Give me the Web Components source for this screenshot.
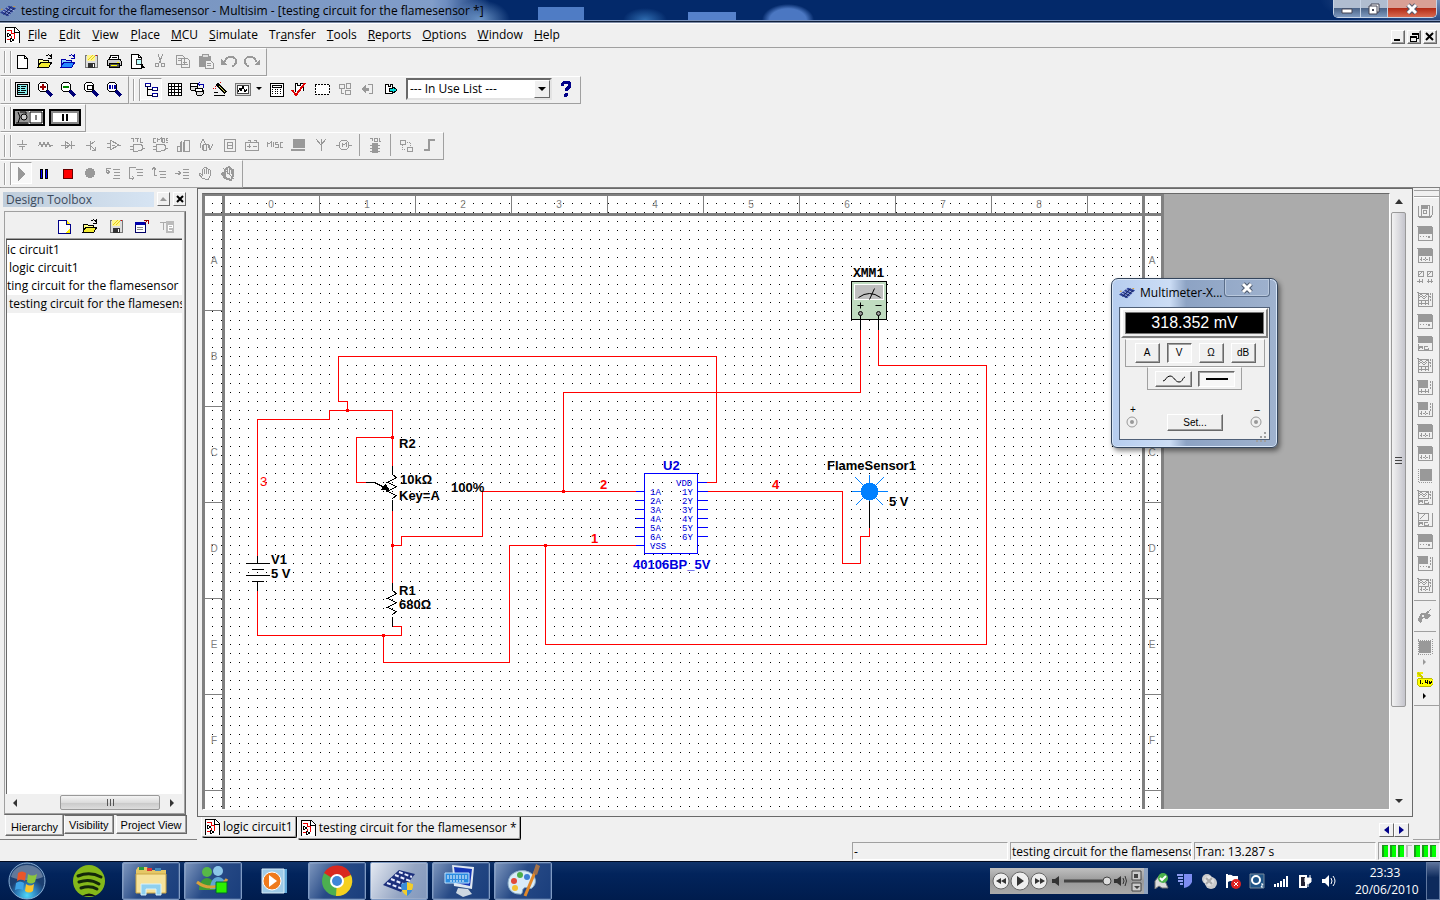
<!DOCTYPE html>
<html lang="en">
<head>
<meta charset="utf-8">
<title>testing circuit for the flamesensor - Multisim</title>
<style>
html,body{margin:0;height:100%}
body{font:12px/16px "Open Sans","Noto Sans",sans-serif;color:#000;background:#f0f0f0;overflow:hidden}
</style>
</head>
<body>
<multisim-desktop></multisim-desktop>
<script>
const G='#999';
const ICONS={
 doc:`<path d="M1 0h10l4 4v12H1z" fill="#fff" stroke="#000"/><path d="M10 0v5h5" fill="none" stroke="#000"/><path d="M3 3h4v3h3v6M3 12h4V9" fill="none" stroke="#e00"/><path d="M3 6l4 2-4 2z M6 11l4 2-4 2z" fill="#fff" stroke="#000"/>`,
 new:`<path d="M3 2h7l3 3v10H3z" fill="#fff" stroke="#000"/><path d="M10 2v3h3" fill="none" stroke="#000"/>`,
 newb:`<path d="M2 2h8l4 4v9H2z" fill="#fff" stroke="#008"/><path d="M10 2l4 4h-4z M14 10v5H9z" fill="#fe0"/><path d="M10 2v4h4v9H2" fill="none" stroke="#008"/>`,
 open:`<path d="M1 14V6h4l1 1h5v2" fill="#ff8" stroke="#000"/><path d="M1 14l3-5h11l-3 5z" fill="#f2ea30" stroke="#000"/><path d="M9 3c2-2 4-1 5 1M14 1v4h-3" fill="none" stroke="#000"/>`,
 openb:`<path d="M1 14V6h4l1 1h5v2" fill="#8cf" stroke="#00a"/><path d="M1 14l3-5h11l-3 5z" fill="#28f" stroke="#00a"/><path d="M9 3c2-2 4-1 5 1M14 1v4h-3" fill="none" stroke="#00a"/>`,
 save:`<path d="M2 2h12v12H2z" fill="#ddd" stroke="#777"/><path d="M4 2h8v6H4z" fill="#fff68c"/><path d="M5 7l5-5M8 7l4-4" stroke="#e4cc18"/><path d="M5 10h7v5H5z" fill="#333"/><path d="M10 11h1v3h-1z" fill="#fff"/><path d="M13 2h1v1h-1z" fill="#e00"/>`,
 print:`<path d="M5 2h8l-1 5H3z" fill="#fff" stroke="#000"/><path d="M6 4h5M5 6h5" stroke="#000"/><path d="M1 8l2-2h11l1 2v4H1z" fill="#ccc" stroke="#000"/><path d="M3 10h10v4H3z" fill="#555" stroke="#000"/><path d="M5 12h6" stroke="#ff0"/><path d="M11 9h2" stroke="#ff0"/>`,
 preview:`<path d="M2 1h7l3 3v11H2z" fill="#fff" stroke="#000"/><path d="M9 1v3h3" fill="none" stroke="#000"/><circle cx="10" cy="9" r="3" fill="#bff" stroke="#333"/><path d="M12 11l3 4" stroke="#000" stroke-width="2"/>`,
 cut:`<path d="M6 1l3 9M11 1L7 10" stroke="${G}" fill="none"/><circle cx="5" cy="12" r="2" fill="none" stroke="${G}"/><circle cx="11" cy="12" r="2" fill="none" stroke="${G}"/>`,
 copy:`<path d="M1 2h6l2 2v7H1z M6 5h6l2 2v7H6z" fill="#f0f0f0" stroke="${G}"/><path d="M3 5h3M3 7h3M8 9h4M8 11h5" stroke="${G}"/>`,
 paste:`<path d="M1 3h12v11H1z" fill="${G}"/><path d="M4 1h6v3H4z" fill="#ddd" stroke="${G}"/><path d="M7 7h5l3 3v5H7z" fill="#f0f0f0" stroke="${G}"/><path d="M9 10h4M9 12h4" stroke="${G}"/>`,
 undo:`<path d="M4 9C4 3 15 2 15 8c0 3-2 5-4 5" fill="none" stroke="${G}" stroke-width="2"/><path d="M0 6v6h6z" fill="${G}"/>`,
 redo:`<path d="M12 9C12 3 1 2 1 8c0 3 2 5 4 5" fill="none" stroke="${G}" stroke-width="2"/><path d="M16 6v6h-6z" fill="${G}"/>`,
 full:`<path d="M1 1h14v14H1z" fill="#eee" stroke="#000"/><path d="M3 3h10v10H3z" fill="#8ee" stroke="#000"/><path d="M4 5h2M7 5h5M4 7h2M7 7h4M4 9h2M7 9h5M4 11h7" stroke="#000"/>`,
 zin:`<path d="M10 10l5 5" stroke="#007" stroke-width="3"/><circle cx="6" cy="6" r="5" fill="#fff" stroke="#000"/><path d="M3 6h6M6 3v6" stroke="#900" stroke-width="2"/>`,
 zout:`<path d="M10 10l5 5" stroke="#007" stroke-width="3"/><circle cx="6" cy="6" r="5" fill="#fff" stroke="#000"/><path d="M3 6h6" stroke="#080" stroke-width="2"/>`,
 zarea:`<path d="M10 10l5 5" stroke="#007" stroke-width="3"/><circle cx="6" cy="6" r="5" fill="#fff" stroke="#000"/><path d="M4 4h5v4H4z" fill="none" stroke="#000"/>`,
 zfit:`<path d="M10 10l5 5" stroke="#007" stroke-width="3"/><circle cx="6" cy="6" r="5" fill="#fff" stroke="#000"/><path d="M3 4h2v4H3zM6 4h1v4H6zM8 4h2v4H8z" fill="#00a"/>`,
 tree:`<path d="M4 5v9h5M4 8h5" fill="none" stroke="#000"/><path d="M2 2h5v3H2zM9 6h5v3H9zM9 12h5v3H9z" fill="#fff" stroke="#006"/><path d="M2 2h5M9 6h5M9 12h5" stroke="#00a"/>`,
 grid:`<path d="M2 2h13v12H2z" fill="#fff" stroke="#000"/><path d="M2 5h13M2 8h13M2 11h13M5 2v12M8 2v12M12 2v12" stroke="#000"/>`,
 db:`<path d="M1 4v4c1 2 6 2 7 0V4M7 9v4c1 2 6 2 7 0V9" fill="#ddd" stroke="#000"/><ellipse cx="5" cy="4" rx="4" ry="2" fill="#fff" stroke="#000"/><ellipse cx="10" cy="9" rx="4" ry="2" fill="#fff" stroke="#000"/><path d="M9 3h5v4M11 1L9 3l2 2" fill="none" stroke="#00a"/>`,
 wand:`<path d="M5 3l9 9" stroke="#000" stroke-width="3"/><path d="M7 5l6 6" stroke="#dd6"/><path d="M2 14h11M2 11h4" stroke="#000"/><path d="M3 5v4M1 7h4M8 1v2" stroke="#d00" stroke-dasharray="1 1"/>`,
 graph:`<path d="M0 2h15v12H0z" fill="#ddd" stroke="#777"/><path d="M2 4h11v8H2z" fill="#fff" stroke="#444"/><path d="M3 11l2-4 1 3 2-5 2 6 2-3" fill="none" stroke="#000"/>`,
 calc:`<path d="M2 2h13v13H2z" fill="#fff" stroke="#000"/><path d="M4 4h9v2H4z" fill="none" stroke="#000"/><path d="M4 8h1v1H4zM7 8h1v1H7zM9 8h1v1H9zM12 8h1v1h-1zM4 10h1v1H4zM7 10h1v1H7zM9 10h1v1H9zM12 10h1v1h-1zM4 12h1v1H4zM7 12h1v1H7zM9 12h1v1H9zM12 12h1v1h-1z" fill="#000"/>`,
 check:`<path d="M4 11V2h2v2h3V2h3v8" fill="#fff" stroke="#000"/><path d="M1 9l4 5L14 2" fill="none" stroke="#d00" stroke-width="2"/>`,
 dash:`<path d="M1 3h14v10H1z" fill="#fff" stroke="#000" stroke-dasharray="2 1"/>`,
 back:`<path d="M2 3h5v4H2zM8 9h5v4H8zM9 2h4v5H9z" fill="none" stroke="${G}"/><path d="M4 8v4h3" stroke="${G}" fill="none"/>`,
 left:`<path d="M1 8l5-4v3h3v3H6v3z" fill="${G}"/><path d="M8 3h4v9H9" fill="none" stroke="${G}"/>`,
 right:`<path d="M2 3h3v2h2V3h2v9H2z" fill="#fff" stroke="#000"/><path d="M14 9L9 5v2H6v3h3v3z" fill="#0dd" stroke="#000"/>`,
 help:`<path d="M4 5c0-5 8-5 8-1 0 3-4 3-4 6" fill="none" stroke="#008" stroke-width="3"/><circle cx="8" cy="14" r="2" fill="#008"/>`,
 src:`<path d="M3 7h10M5 9h6M8 3v4M8 9v4" stroke="${G}"/>`,
 res:`<path d="M1 8h1l1-3 2 5 2-5 2 5 2-5 2 5 1-2h2" fill="none" stroke="${G}"/>`,
 diode:`<path d="M1 8h14M5 4v8l5-4zM11 4v8" fill="none" stroke="${G}"/>`,
 bjt:`<path d="M3 8h4M7 4v9M7 8l5-4M7 8l5 5M9 13h3v-3" fill="none" stroke="${G}"/>`,
 amp:`<path d="M4 3v10l9-5zM1 6h3M1 10h3M13 8h2M6 8h3" fill="none" stroke="${G}"/>`,
 ttl:`<path d="M2 1h3M4 1v4M6 1h4M8 1v4M11 1v4h3M4 7h5c6 0 6 7 0 7H4zM1 9h3M1 12h3M13 11h3" fill="none" stroke="${G}"/>`,
 cmos:`<path d="M4 1H1v4h3M5 5V1l2 2 2-2v4M10 1h2v4h-2zM16 1h-2v2h2v2h-2M4 7h5c6 0 6 7 0 7H4zM1 9h3M1 12h3M13 11h3" fill="none" stroke="${G}"/>`,
 dig:`<path d="M6 4v10H2V9h4M9 3h5v11H8M9 3v9" fill="none" stroke="${G}"/><path d="M6 5v9M9 5v9" stroke="${G}" stroke-width="2"/>`,
 mix:`<path d="M2 8l3-6 3 6M2 8v3M5 7h3v6H5zM10 7l2 6 3-6" fill="none" stroke="${G}"/><path d="M5 8v5M10 7l2 5" stroke="${G}" stroke-width="2"/>`,
 ind:`<path d="M3 2h11v12H3zM6 5h5v6H6zM6 8h5" fill="none" stroke="${G}"/>`,
 pow:`<path d="M1 5h13v8H1zM4 3h2v2M10 3h2v2M3 9h4M9 9h4M5 7v4" fill="none" stroke="${G}"/>`,
 misc:`<path d="M0 10V5l2 2 2-2v5M6 5v5M11 5H8v2h3v3H8M16 5h-3v5h3" fill="none" stroke="${G}"/>`,
 pc:`<path d="M3 2h12v9H3z" fill="${G}"/><path d="M1 13h14" stroke="${G}" stroke-width="2"/>`,
 ant:`<path d="M3 2l5 6 5-6M8 2v12" fill="none" stroke="${G}"/>`,
 motor:`<circle cx="8" cy="8" r="5" fill="none" stroke="${G}"/><path d="M0 8h3M13 8h3M6 10V6l2 2 2-2v4" fill="none" stroke="${G}"/>`,
 mcu:`<path d="M3 1h2v3M7 1h3v3H7zM12 1v3h2" fill="none" stroke="${G}"/><path d="M5 6h6v10H5z" fill="${G}"/><path d="M3 8h10M3 11h10M3 14h10" stroke="${G}"/>`,
 hier:`<path d="M2 3h5v4H2zM9 10h5v4H9z" fill="none" stroke="${G}"/><path d="M4 8v4h4M9 5h3v4" fill="none" stroke="${G}" stroke-dasharray="1 1"/>`,
 bus:`<path d="M3 13h5V3h6" fill="none" stroke="${G}" stroke-width="2"/>`,
 play:`<path d="M5 2l7 7-7 7z" fill="${G}"/>`,
 pause:`<path d="M4 4h2v9H4zM9 4h2v9H9z" fill="#00f" stroke="#000"/>`,
 stop:`<path d="M4 4h9v9H4z" fill="red" stroke="#600"/>`,
 rec:`<circle cx="8" cy="8" r="5" fill="${G}"/>`,
 st1:`<path d="M8 4h7M9 7h6M9 10h6M8 13h7M6 3H1v4h3M2 5l3 2-3 2" fill="none" stroke="${G}"/>`,
 st2:`<path d="M8 4h7M9 7h6M9 10h6M8 2H1v11h5M4 11l2 2-2 2" fill="none" stroke="${G}"/>`,
 st3:`<path d="M8 6h7M9 9h6M9 12h6M6 10H3V3M1 5l2-3 2 3" fill="none" stroke="${G}"/>`,
 st4:`<path d="M9 4h6M9 7h6M9 10h6M9 13h6M1 8h6M4 6l3 2-3 2" fill="none" stroke="${G}"/>`,
 hand:`<path d="M5 13L2 9l1-1 2 2V5l2-2 2-1 2 2 2 1v6l-2 4z" fill="none" stroke="${G}"/><path d="M7 4v5M9 3v6M11 5v4" stroke="${G}"/>`,
 hand2:`<path d="M5 13L2 9l1-1 2 2V5l2-2 2-1 2 2 2 1v6l-2 4z" fill="none" stroke="${G}" stroke-width="2"/><path d="M7 4v5M9 3v6M11 5v4M3 3l11 11" stroke="${G}"/>`,
 win:`<path d="M1 5h10v9H1z" fill="#fff" stroke="#006"/><path d="M1 5h10" stroke="#00a" stroke-width="3"/><path d="M3 9h6M3 11h6" stroke="#888"/><path d="M10 2h4v4M14 2l-3 3" stroke="#900" fill="none"/>`,
 te:`<path d="M6 3h8v12H6z" fill="#bbb"/><path d="M8 9h4V7H8v5h4" fill="none" stroke="#fff"/><path d="M0 4h6M3 4v8" stroke="#aaa" fill="none"/>`,
 probe:`<path d="M0 1h6v2H3v3H0z" fill="#ee0"/><path d="M2 7h12l2 2v4l-2 2H2l-2-2V9z" fill="#ff0" stroke="#bb0"/><path d="M1 2l5 5" stroke="#cc0" stroke-width="2"/><path d="M3 9v4M5 12h1M8 9v2h3M10 9v4M12 10l1 3 2-3" fill="none" stroke="#000"/>`,
 hook:`<path d="M1 13c0-5 3-9 7-8l6-4-3 5 4 1-5 4-4-1-2 5z" fill="${G}"/><circle cx="6" cy="8" r="1" fill="#eee"/>`,
 chip:`<path d="M2 2h12v12H2z" fill="${G}"/><path d="M1 0v16M15 0v16" stroke="${G}" stroke-dasharray="1 1"/><path d="M1 1h14M1 15h14" stroke="${G}" stroke-dasharray="1 1"/>`
};
// Front-panel icons of the instrument strip: one frame with a varying screen and row of terminals
const panel=(s,t)=>`<path d="M0 1h1v1M15 2v13H1V9" fill="none" stroke="${G}"/>${s}${t}`;
const big=`<path d="M1 1h14v8H1z" fill="${G}"/>`,sm=`<path d="M1 1h10v8H1z" fill="${G}"/><path d="M13 2v8" stroke="${G}" stroke-dasharray="2 1"/>`,wave=`<path d="M1 2h10v7H1zM1 6l3-3 3 3 3-3 3 3M1 8l3-3 3 3 3-3" fill="none" stroke="${G}"/><path d="M13 2v8" stroke="${G}" stroke-dasharray="2 1"/>`;
const t1=`<path d="M3 11h7" stroke="${G}" stroke-dasharray="1 2"/><circle cx="12" cy="12" r="1" fill="none" stroke="${G}"/>`,t2=`<path d="M3 12h10M4 10v4M8 10v4M12 10v4" stroke="${G}" stroke-dasharray="2 1"/>`,t3=`<path d="M2 12h10M4 10v4M8 10v4M11 10v4" stroke="${G}"/>`,ag=`<path d="M2 14v-3h3v3M2 12h3M11 11H7v3h4v-1" fill="none" stroke="${G}"/>`;
Object.assign(ICONS,{
 i0:`<path d="M1 3v9l2 3M15 3v9l-2 3M4 2v11h8V2z" fill="none" stroke="${G}"/><path d="M5 2h6v4H5z" fill="${G}"/><circle cx="8" cy="9" r="2" fill="none" stroke="${G}"/><path d="M3 14h10" stroke="${G}" stroke-width="2"/>`,
 i1:panel(big,t1),i2:panel(big,t2),i3:`<path d="M1 2h5v5H1zM10 2h5v5h-5zM2 6l3-3M11 6l3-3M0 12h6M10 12h6M2 10v4M5 10v4M11 10v4M14 10v4" fill="none" stroke="${G}"/>`,
 i4:panel(wave,t3),i5:panel(big,t1),i6:panel(`<path d="M1 1h14v7H1z" fill="${G}"/>`,ag),i7:panel(wave,t3),i8:panel(sm,t3),i9:panel(sm,t2),
 i10:panel(big,t2),i11:panel(big,t2),i12:`<path d="M3 2h12v12H3z" fill="${G}"/><path d="M1 2v13h14" fill="none" stroke="${G}" stroke-dasharray="1 1"/>`,
 i13:panel(wave,ag),i14:panel(`<path d="M1 2h10v7H1zM3 8l6-6" fill="none" stroke="${G}"/>`,ag),i15:panel(big,t1),i16:panel(sm,t1),i17:panel(wave,t2)
});
const icon=(n,s=16)=>`<svg width="${s}" height="${s}" viewBox="0 0 16 16" shape-rendering="crispEdges" aria-hidden="true">${ICONS[n]}</svg>`;
const BOARD=`<path d="M0 11l5-4 5-4 8 3-4 4-5 5z" fill="#2b3f96"/><path d="M3 9l8 4M5 7l8 4M8 5l8 4" stroke="#b9c8ee"/><path d="M4 13l9-9M7 14l9-8" stroke="#101c50"/><path d="M1 7h2M15 4h2" stroke="#d92"/>`;
const define=(tag,css,html)=>customElements.define(tag,class extends HTMLElement{
 constructor(){super();this.attachShadow({mode:'open'}).innerHTML=`<style>*{box-sizing:border-box}button{font:inherit;color:inherit;margin:0;padding:0;border:0;background:none}svg{display:block}${css}</style>${html}`}
});

define('title-bar',`
:host{display:flex;justify-content:space-between;height:24px;flex:none;border-bottom:1px solid #fff;box-shadow:inset 0 -1px #7d8ba5,inset 0 -2px #10203c,inset 0 -3px #7e95bd;
background:radial-gradient(ellipse 30px 20px at 480px 20px,#6c95c7,transparent),linear-gradient(#4f7cc5,#4f7cc5) 538px 7px/46px 14px no-repeat,radial-gradient(ellipse 22px 12px at 645px 20px,#2f6cb0,transparent),linear-gradient(#5581cb,#5581cb) 688px 12px/48px 9px no-repeat,radial-gradient(ellipse 26px 16px at 788px 20px,#4b77c2 70%,transparent),radial-gradient(ellipse 120px 30px at right top,#7290ba,transparent),linear-gradient(90deg,#7491bc,#819dc9 30%,#6d8dc0 31%,#03296a 34%,#03296a)}
.name{display:flex;gap:5px;align-items:center;height:21px;white-space:nowrap}
.caps{display:flex;height:18px;margin-right:3px;border:1px solid #c6d3e6;border-top:0;border-radius:0 0 5px 5px;overflow:hidden}
button{width:27px;display:grid;place-items:center;background:linear-gradient(#b0bdd0 0 45%,#4b6488 50%,#7f9ac0);border-right:1px solid #c6d3e6}
.close{width:48px;border:0;background:linear-gradient(#d9a095 0 45%,#b32c17 50%,#d96a50)}`,
`<div class="name"><svg width="16" height="16" viewBox="0 0 18 18">${BOARD}</svg><span>testing circuit for the flamesensor - Multisim - [testing circuit for the flamesensor *]</span></div>
<div class="caps"><button aria-label="Minimize"><svg width="14" height="12"><path d="M2 6h10v4H2z" fill="#fff" stroke="#445"/></svg></button><button aria-label="Restore"><svg width="14" height="12"><path d="M4 1h8v8H4z" fill="#fff" stroke="#445"/><path d="M2 3h8v8H2z" fill="#fff" stroke="#445"/><path d="M5 6h2v2H5z" fill="#445"/></svg></button><button class="close" aria-label="Close"><svg width="14" height="12"><path d="M3 2l8 8M11 2l-8 8" stroke="#545b70" stroke-width="5"/><path d="M3 2l8 8M11 2l-8 8" stroke="#fff" stroke-width="3"/></svg></button></div>`);

define('menu-bar',`
:host{display:flex;align-items:center;height:24px;flex:none;padding:0 3px 2px 4px;border-bottom:1px solid #a0a0a0}
nav{display:flex;flex:1;margin-left:2px}nav button{padding:0 6px;height:20px}nav button:nth-child(n+4){padding-right:5px}
.mdi{display:flex;gap:2px;padding-top:4px}.mdi button{width:14px;height:14px;display:grid;place-items:center;border:1px solid;border-color:#fff #696969 #696969 #fff;box-shadow:inset -1px -1px #a0a0a0}`,
`${icon('doc')}<nav>${['_File','_Edit','_View','_Place','_MCU','_Simulate','Tr_ansfer','_Tools','_Reports','_Options','_Window','_Help'].map(t=>`<button>${t.replace(/_(.)/,'<u>$1</u>')}</button>`).join('')}</nav>
<div class="mdi"><button aria-label="Minimize sheet"><svg width="10" height="10"><path d="M1 7h6v2H1z"/></svg></button><button aria-label="Restore sheet"><svg width="10" height="10" fill="none" stroke="#000" shape-rendering="crispEdges"><path d="M3 1h6v5H7M3 2h6M3 1v2M1 4h6v5H1zM1 5h6"/></svg></button><button aria-label="Close sheet"><svg width="10" height="10"><path d="M1 1l7 7M8 1L1 8" stroke="#000" stroke-width="2"/></svg></button></div>`);

const btn=(n,l,c='')=>`<button class="${c}" aria-label="${l}">${icon(n)}</button>`;
const set=s=>s.split(' ').map(n=>n==='|'?'<i></i>':btn(n,n)).join('');
define('tool-rows',`
:host{display:block;flex:none;box-shadow:inset 0 -1px #808080}
.row{display:flex;height:28px}
.bar{display:flex;align-items:center;padding:0 3px 2px 9px;border:1px solid;border-color:#fff #a0a0a0 #a0a0a0 transparent;position:relative}
.bar+.bar{padding-left:10px}
.bar::before{content:"";position:absolute;left:3px;top:2px;bottom:2px;width:5px;border:1px solid #a0a0a0;border-width:0 1px;box-shadow:1px 0 #fff,inset 1px 0 #fff}
button{width:23px;height:22px;display:grid;place-items:center}
.on{width:22px;border:1px solid;border-color:#a0a0a0 #fff #fff #a0a0a0;background:#f8f8f8}
i{width:1px;height:22px;background:#a0a0a0;margin:0 3px 0 4px}
.arrow{width:10px}
select{width:146px;height:22px;font:inherit;appearance:none;background:#fff;border:2px solid;border-color:#696969 #e3e3e3 #e3e3e3 #696969;border-radius:0;padding:0 2px;margin:0 2px 0 4px;color:#000}
.pick{position:relative;display:flex}.pick span{position:absolute;right:4px;top:2px;width:16px;height:18px;background:#f0f0f0;border:1px solid;border-color:#fff #696969 #696969 #fff;display:grid;place-items:center;pointer-events:none}
.sw{width:32px;height:17px;border:2px solid #000;background:#fff;margin-right:4px}.sw svg{width:28px;height:13px}
.wide{padding-left:12px;padding-right:0}`,
`<div class="row"><div class="bar">${set('new open openb save print preview cut copy paste undo redo')}</div></div>
<div class="row"><div class="bar">${set('full zin zout zarea zfit')}</div><div class="bar">${btn('tree','Design toolbox','on')}${set('grid db wand graph')}<button class="arrow" aria-label="Graph list"><svg width="6" height="4"><path d="M0 0h6L3 3z"/></svg></button>${set('calc check dash back left right')}<label class="pick"><select aria-label="In use list"><option>--- In Use List ---</option></select><span><svg width="8" height="5"><path d="M0 0h8L4 4z"/></svg></span></label>${set('help')}</div></div>
<div class="row"><div class="bar wide"><button class="sw" aria-label="Run switch"><svg viewBox="0 0 28 13"><path d="M0 0h14v13H0z" fill="#999"/><path d="M3 1l2 5-2 6M1 12h12M5 1h6v2" stroke="#000" fill="none"/><circle cx="9" cy="6" r="3" fill="#ccc" stroke="#000"/><path d="M15 1h12v11H15zM21 4v5" stroke="#000" fill="none"/></svg></button><button class="sw" aria-label="Pause simulation"><svg viewBox="0 0 28 13"><path d="M1 1h26v11H1z" fill="#fff" stroke="#888" stroke-width="2"/><path d="M11 3h2v7h-2zM15 3h2v7h-2z"/></svg></button></div></div>
<div class="row"><div class="bar">${set('src res diode bjt amp ttl cmos dig mix ind pow misc pc ant motor | mcu | hier bus')}</div></div>
<div class="row"><div class="bar">${btn('play','Run','on')}${set('pause stop rec st1 st2 st3 st4 hand hand2')}</div></div>`);

define('design-toolbox',`
:host{display:flex;flex-direction:column;width:197px;flex:none;padding:4px 11px 3px 3px;border-bottom:1px solid #808080}
header{display:flex;gap:3px;height:15px}h2{flex:1;margin:0;font:inherit;line-height:15px;color:#3c4a5c;padding-left:3px;background:linear-gradient(90deg,#bfcddb,#d6e4f3)}
header button{width:13px;height:14px;border:1px solid;border-color:#fff #696969 #696969 #fff;display:grid;place-items:center}
.frame{flex:1;display:flex;flex-direction:column;min-height:0;margin:4px 0 0 1px;border:1px solid;border-color:#a0a0a0 #696969 #696969 #a0a0a0;box-shadow:inset -1px -1px #a0a0a0;padding:1px 3px 3px 1px}
.tools{display:flex;justify-content:flex-end;gap:10px;height:26px;align-items:center;border-bottom:1px solid #a0a0a0;padding-right:6px}
ul{flex:1;margin:0;padding:1px 0 0;list-style:none;background:#fff;border-top:1px solid #404040;border-left:1px solid #696969;overflow:hidden;white-space:nowrap}
li{height:18px;line-height:18px}.in{padding-left:2px}.sel{background:#f0f0f0}
.sb{display:flex;height:17px;align-items:center;justify-content:space-between;background:#f0f0f0;padding:0 7px}
.thumb{width:100px;height:15px;margin-left:32px;border:1px solid #999;border-radius:2px;background:linear-gradient(#f4f4f4,#dcdcdc 50%,#c8c8c8 51%,#ddd);display:grid;place-items:center}
.tabs{display:flex;align-items:flex-start;font:11px/16px "Liberation Sans",sans-serif;padding-left:2px;gap:2px;white-space:nowrap}.tabs button{height:19px;padding:0 4px;border:1px solid;border-color:#696969 #696969 #696969 #fff;box-shadow:inset -1px -1px #a0a0a0}.tabs .act{height:21px;border-top:0;padding:3px 5px 0;margin-right:-2px}`,
`<header><h2>Design Toolbox</h2><button aria-label="Collapse"><svg width="7" height="4"><path d="M0 4h7L3 0z" fill="#999"/></svg></button><button aria-label="Close toolbox"><svg width="8" height="8"><path d="M1 1l6 6M7 1L1 7" stroke="#000" stroke-width="2"/></svg></button></header>
<div class="frame"><div class="tools">${btn('newb','New')}${btn('open','Open')}${btn('save','Save')}${btn('win','Close sheet')}${btn('te','Rename')}</div>
<ul><li>ic circuit1</li><li class="in">logic circuit1</li><li>ting circuit for the flamesensor</li><li class="in sel">testing circuit for the flamesenso</li></ul>
<div class="sb"><svg width="5" height="8"><path d="M4 0v8L0 4z" fill="#333"/></svg><div class="thumb"><svg width="8" height="7" shape-rendering="crispEdges"><path d="M1 0v7M4 0v7M7 0v7" stroke="#555"/></svg></div><svg width="5" height="8"><path d="M0 0v8l4-4z" fill="#333"/></svg></div></div>
<div class="tabs"><button class="act">Hierarchy</button><button>Visibility</button><button>Project View</button></div>`);

const zig=(x,y)=>`<path d="M${x} ${y}l4 3-9 5 9 4-9 5 9 4-4 3"/>`;
const pins=[491,500,509,518,527,536];
define('schematic-sheet',`
:host{display:block;flex:1;min-width:0;min-height:0;background:#ababab;border:1px solid;border-color:#696969 #fff #fff #808080;overflow:hidden}
svg{width:100%;height:100%}
text{font:bold 13px "Liberation Sans",sans-serif}
.ruler text{font:10px "Liberation Sans",sans-serif;fill:#808080;text-anchor:middle}
.net text{fill:#f00}.ic text{fill:#0000e0}.ic .pin{font:9px "Liberation Mono",monospace}.net .lt{font-weight:normal}
.mono{font:bold 13px "Liberation Mono",monospace}`,
`<svg role="img" aria-label="Flame sensor test circuit"><defs><pattern id="dots" width="9" height="9" x="212" y="203" patternUnits="userSpaceOnUse"><path d="M0 0h1v1H0z"/></pattern></defs>
<g transform="translate(-203 -194)" shape-rendering="crispEdges">
<path d="M202 193h962v1300H202z" fill="#808080"/><path d="M205 196h17v17h-17zM225 196h917v17H225zM1145 196h16v17h-16zM205 216h17v1200h-17zM225 216h917v1200H225zM1145 216h16v1200h-16z" fill="#fff"/>
<g fill="#808080">${[1,2,3,4,5,6,7,8,9].map(i=>`<path d="M${223+96*i} 196h1v17h-1z"/>`).join('')}${[0,1,2,3,4,5,6].map(i=>`<path d="M205 ${310+96*i}h17v1h-17zM1145 ${310+96*i}h16v1h-16z"/>`).join('')}</g>
<path d="M205 196h956v1200H205z" fill="url(#dots)"/>
<g class="ruler">${[0,1,2,3,4,5,6,7,8].map(i=>`<text x="${271+96*i}" y="208">${i}</text>`).join('')}${[...'ABCDEF'].map((c,i)=>`<text x="214" y="${264+96*i}">${c}</text><text x="1152" y="${264+96*i}">${c}</text>`).join('')}</g>
<g transform="translate(.5 .5)" fill="none">
<g stroke="#f00"><path d="M257 555V419H329V410H392V465M347 410V401H338V356H716V482H706M392 437H356V482H365M392 510V582M392 545H401V536H482V491H635M563 491V392H860V329M878 329V365H986V644H545V545M392 626H401V635H257V590M383 635V662H509V545H635M707 491H842V563H860V536H869V527"/></g>
<g fill="#f00">${[[347,410],[392,437],[392,545],[383,635],[563,491],[545,545]].map(([x,y])=>`<path d="M${x-1} ${y-1}h2v2h-2z" stroke="#f00"/>`).join('')}</g>
<g stroke="#000"><path d="M257 555V563M245 563h24M251 569h12M245 575h24M251 581h12M257 581v9M392 465v9M392 499v11M392 582v8M392 616v10M365 482h9l12 6M869 500v27M860 314v15M878 314v15"/>${zig(392,474)}${zig(392,590)}<path d="M381 489l4-5 4 6z" fill="#000"/></g>
<path d="M644 473h53v80h-53zM635 545h9M697 482h9${pins.map(y=>`M635 ${y}h9M697 ${y}h10`).join('')}" stroke="#00f"/>
<path d="M851 281h35v38h-35z" fill="#c0dcc0" stroke="#000" stroke-width="1"/><path d="M854 284h29v15h-29z" fill="#c0c0c0" stroke="#fff"/><g stroke="#000" shape-rendering="auto"><path d="M858 297q11-8 22 0M869 299l5-11M857 305h6M860 302v6M875 305h6M860 314v7M878 314v7"/><circle cx="860" cy="313" r="2" fill="#999"/><circle cx="878" cy="313" r="2" fill="#999"/></g>
<path d="M851 491h36M869 474v26M855 477l28 28M883 477l-28 28" stroke="#0080ff"/><circle cx="869" cy="491" r="9" fill="#0080ff"/></g>
<text x="271" y="564">V1</text><text x="271" y="578">5 V</text><text x="399" y="448">R2</text><text x="400" y="484">10kΩ</text><text x="399" y="500">Key=A</text><text x="451" y="492">100%</text><text x="399" y="595">R1</text><text x="399" y="609">680Ω</text>
<text x="827" y="470">FlameSensor1</text><text x="889" y="506">5 V</text><text class="mono" x="853" y="277">XMM1</text>
<g class="net"><text class="lt" x="260" y="486">3</text><text x="600" y="489">2</text><text x="591" y="543">1</text><text x="772" y="489">4</text></g>
<g class="ic"><text x="663" y="470">U2</text><text x="633" y="569">40106BP_5V</text><text class="pin" x="676" y="486">VDD</text><text class="pin" x="650" y="549">VSS</text>${pins.map((y,i)=>`<text class="pin" x="650" y="${y+4}">${i+1}A</text><text class="pin" x="682" y="${y+4}">${i+1}Y</text>`).join('')}</g>
</g></svg>`);

define('sheet-area',`
:host{display:flex;flex-direction:column;flex:1;min-width:0;position:relative}
.view{flex:1;display:flex;min-height:0;border:1px solid #696969;padding:4px 5px 6px 4px}
.vs{width:17px;display:flex;flex-direction:column;align-items:center;justify-content:space-between;background:#f0f0f0;padding:6px 0}
.thumb{flex:1;width:15px;margin:8px 0 92px;border:1px solid #999;border-radius:2px;background:linear-gradient(90deg,#f2f2f2,#dcdce0 50%,#c4c4cc);display:grid;place-items:center}
.tabs{display:flex;height:23px;padding:0 4px 0 4px;align-items:flex-start}
.tabs .t{display:flex;align-items:center;gap:3px;height:21px;padding:0 3px 0 2px;border:1px solid #000;border-top:0;border-left-color:#fff;box-shadow:inset -1px -1px #a0a0a0;border-radius:0 0 2px 4px;white-space:nowrap}.tabs .act{height:23px}
.nav{margin-left:auto;display:flex;padding-top:6px}.nav button{width:15px;height:14px;border:1px solid;border-color:#fff #696969 #696969 #fff;display:grid;place-items:center}
multimeter-window{position:absolute;right:135px;top:90px}`,
`<div class="view"><schematic-sheet></schematic-sheet><div class="vs"><svg width="8" height="5"><path d="M0 5h8L4 0z" fill="#333"/></svg><div class="thumb"><svg width="7" height="8" shape-rendering="crispEdges"><path d="M0 1h7M0 4h7M0 7h7" stroke="#444"/></svg></div><svg width="8" height="5"><path d="M0 0h8L4 4z" fill="#333"/></svg></div></div>
<div class="tabs"><button class="t">${icon('doc')}<span>logic circuit1</span></button><button class="t act">${icon('doc')}<span>testing circuit for the flamesensor *</span></button><div class="nav"><button aria-label="Previous sheet"><svg width="5" height="8"><path d="M5 0v8L0 4z" fill="#008"/></svg></button><button aria-label="Next sheet"><svg width="5" height="8"><path d="M0 0v8l5-4z" fill="#008"/></svg></button></div></div><multimeter-window></multimeter-window>`);

define('multimeter-window',`
:host{display:block;width:167px;padding:0 7px 7px;border:1px solid #34455c;border-radius:7px 7px 6px 6px;background:linear-gradient(90deg,#b6cdef,#ccddf5 35%,#8da3c4 45%,#9fb2ce);box-shadow:inset 0 0 0 1px #d8e6f8,2px 3px 5px #0007}
header{display:flex;align-items:flex-start;height:28px}h3{font:inherit;margin:6px 0 0 5px;flex:1;white-space:nowrap}header svg{margin-top:6px}
header button{width:46px;height:18px;border:1px solid #5b6e8a;border-top:0;border-radius:0 0 4px 4px;box-shadow:inset 0 0 0 1px #b9c8dd}header button svg{margin:2px auto}
.body{background:#f0f0f0;border:1px solid #506078;padding:0 1px;height:133px;font:10px/14px "Liberation Sans",sans-serif}
.lcd{height:30px;border:2px solid;border-color:#fff #808080 #808080 #fff;padding:2px}output{display:block;background:#000;color:#fff;font:16px/20px "Liberation Sans",sans-serif;text-align:center;border:1px solid #777}
.grp{display:flex;justify-content:space-between;align-items:center;border:1px solid;border-color:#fff #a0a0a0 #a0a0a0;margin:1px auto 0;width:140px;height:28px;padding:0 8px 0 9px}
.two{width:95px;height:23px;padding:0 6px 0 7px;margin-top:0}
.grp button,.set{width:25px;height:20px;border:1px solid;border-color:#fff #696969 #696969 #fff;box-shadow:inset -1px -1px #a0a0a0}
.two button{width:37px;height:16px}.two svg{margin:auto}.grp .on{border-color:#696969 #fff #fff #696969;box-shadow:inset 1px 1px #a0a0a0;background:#f7f7f7}
.foot{display:flex;justify-content:space-between;align-items:flex-start;padding:14px 4px 0 5px}.set{width:56px;height:17px;margin-top:10px}.foot div{text-align:center;line-height:12px;width:14px}`,
`<header><svg width="16" height="16" viewBox="0 0 18 18">${BOARD}</svg><h3>Multimeter-X...</h3><button aria-label="Close multimeter"><svg width="14" height="12"><path d="M3 2l8 8M11 2l-8 8" stroke="#4e5a6e" stroke-width="5"/><path d="M3 2l8 8M11 2l-8 8" stroke="#fff" stroke-width="3"/></svg></button></header>
<div class="body"><div class="lcd"><output>318.352 mV</output></div><div class="grp"><button>A</button><button class="on">V</button><button>Ω</button><button>dB</button></div>
<div class="grp two"><button aria-label="AC"><svg width="24" height="10"><path d="M1 7C4 7 4 2 8 2s5 6 9 6 3-4 6-5" fill="none" stroke="#000" stroke-width="1"/></svg></button><button class="on" aria-label="DC"><svg width="24" height="10"><path d="M1 4h22v2H1z"/></svg></button></div>
<div class="foot"><div>+<svg width="12" height="12"><circle cx="6" cy="6" r="5" fill="none" stroke="#999"/><circle cx="6" cy="6" r="2" fill="#999"/></svg></div><button class="set">Set...</button><div>–<svg width="12" height="12"><circle cx="6" cy="6" r="5" fill="none" stroke="#999"/><circle cx="6" cy="6" r="2" fill="#999"/></svg></div></div>
<svg width="12" height="12" style="margin:0 1px 0 auto" shape-rendering="crispEdges"><path d="M9 1h2v2H9zM9 5h2v2H9zM5 5h2v2H5zM9 9h2v2H9zM5 9h2v2H5zM1 9h2v2H1z" fill="#a0a0a0"/></svg></div>`);

define('instrument-bar',`
:host{display:flex;flex-direction:column;align-items:center;width:27px;flex:none;padding-top:2px;border-bottom:1px solid #a0a0a0;border-right:1px solid #a0a0a0}
.grip{width:25px;height:7px;border:1px solid #a0a0a0;border-width:1px 0;box-shadow:0 1px #fff;margin-bottom:2px;flex:none}
.strip{display:flex;flex-direction:column;align-items:center;border-bottom:1px solid #a0a0a0;padding:1px 2px 5px 0}
button{width:23px;height:22px;display:grid;place-items:center}i{width:22px;height:1px;background:#a0a0a0;margin:4px 0 4px}.ar{height:8px}.pr{height:26px}`,
`<div class="grip"></div><div class="strip">${Array.from({length:18},(_,i)=>btn('i'+i,'Instrument '+(i+1))).join('')}<i></i>${btn('hook','Current probe')}<i></i>${btn('chip','LabVIEW instruments')}<button class="ar" aria-label="More instruments"><svg width="4" height="6"><path d="M0 0v6l3-3z" fill="#999"/></svg></button>${btn('probe','Measurement probe','pr')}<button class="ar" aria-label="Probe settings"><svg width="4" height="6"><path d="M0 0v6l3-3z"/></svg></button></div>`);

define('status-bar',`
:host{display:flex;justify-content:flex-end;height:21px;flex:none;gap:2px;padding:2px 0 1px}
div{border:1px solid;border-color:#a0a0a0 #fff #fff #a0a0a0;white-space:nowrap;overflow:hidden;padding-left:1px;width:182px;line-height:17px}
.a{width:156px}.l{width:62px;display:flex;gap:2px;padding:2px 3px;align-items:stretch}.l b{width:6px;background:#0f0;border-left:2px solid #1a9a1a;border-top:1px solid #1a9a1a}.l .off{background:#eee;border-color:#bbb}`,
`<div class="a">-</div><div>testing circuit for the flamesensor</div><div>Tran: 13.287 s</div><div class="l" role="img" aria-label="Simulation activity"><b></b><b></b><b></b><b class="off"></b><b></b><b></b><b></b></div>`);

const APP={
explorer:`<path d="M3 7l2-3h9l2 3h17v22H3z" fill="#e5c766"/><path d="M3 11h30v19H3z" fill="#f6e29b" stroke="#c9a545"/><path d="M6 4h5v3H6z" fill="#2a9a3a"/><path d="M14 5h5v3h-5z" fill="#d33"/><path d="M22 5h6v3h-6z" fill="#48b"/><path d="M8 32V21h20v11h-5v-6H13v6z" fill="#8fd0ef" stroke="#d9f2fd"/>`,
people:`<circle cx="12" cy="9" r="5" fill="#57b847"/><path d="M4 27c0-16 16-16 16 0z" fill="#3f9b35"/><circle cx="23" cy="8" r="5" fill="#8cc6e8"/><path d="M15 26c0-16 16-16 17 0z" fill="#5fa6d4"/><path d="M2 19c10 8 24 6 30-3" fill="none" stroke="#d9a13a" stroke-width="3"/><path d="M21 19h11v11H21z" fill="#2df000" stroke="#063"/>`,
chrome:`<circle cx="18" cy="18" r="15" fill="#4caf50"/><path d="M18 18L5 10A15 15 0 0 1 32 12z" fill="#d9281f"/><path d="M18 18l14-6a15 15 0 0 1-15 21z" fill="#f5d01f"/><circle cx="18" cy="18" r="7" fill="#fff"/><circle cx="18" cy="18" r="5" fill="#3f86d8"/>`,
board:`<path d="M2 22l16-15 16 4-14 18z" fill="#1c2f7c"/><path d="M6 20l16 6M10 16l15 6M14 12l15 6M18 9l13 5" stroke="#e8ecff" stroke-width="2" stroke-dasharray="4 2"/><path d="M20 21l6-2 6 2c0 7-2 9-6 12-4-3-6-5-6-12z" fill="#3b8bd8"/><path d="M26 19l6 2c0 3 0 4-1 6h-5zM26 27v6c-3-2-5-4-5-6z" fill="#f3cd2c"/>`,
monitor:`<path d="M9 2l22 2-2 22-18-3z" fill="#dfe7f0"/><path d="M11 4l18 2-2 17-14-3z" fill="#1537b8"/><path d="M15 25l10 1 4 5-9 3-7-4z" fill="#cfd8e2"/><path d="M2 10h24v10H2z" fill="#2b8be0" stroke="#bfe3ff"/><path d="M4 13h20M4 15h20M7 18h14" stroke="#fff" stroke-dasharray="2 1"/>`,
paint:`<path d="M3 20C3 10 15 5 24 9c8 4 8 12 3 16-3 2-5-2-8 0s0 7-5 6C8 31 3 27 3 20z" fill="#d9ecf8" stroke="#89aac4"/><circle cx="9" cy="18" r="3" fill="#e04a3a"/><circle cx="15" cy="12" r="3" fill="#4cae4a"/><circle cx="22" cy="14" r="3" fill="#3b7fd4"/><circle cx="10" cy="25" r="3" fill="#f3c132"/><path d="M20 33L30 9" stroke="#e0882a" stroke-width="3"/><path d="M28 10l3-9 4 2-3 9z" fill="#a2714a"/>`};
const app=(n,c='')=>`<button class="app ${c}" aria-label="${n}"><svg width="36" height="36" viewBox="0 0 36 36">${APP[n]}</svg></button>`;
const tray=(l,p)=>`<button aria-label="${l}"><svg width="16" height="16">${p}</svg></button>`;
define('win-taskbar',`
:host{display:flex;align-items:center;height:39px;flex:none;color:#fff;background:linear-gradient(#10336a,#02245c 30%,#001c4d);border-top:1px solid #000a20;padding-left:8px}
.orb{width:38px;height:38px;margin-right:24px}.mid{width:38px;height:38px}.mid svg{margin:auto}
.app{width:58px;height:38px;margin-right:4px;border:1px solid #7f9bc4;border-radius:2px;background:linear-gradient(120deg,#7e97be,#274a86 45%,#1a3e7c);box-shadow:inset 0 0 0 1px #ffffff22}.app svg{margin:auto}.act{background:linear-gradient(120deg,#e4e9f2,#94a5c3 60%,#8298bd)}
.media{margin-left:auto;width:158px;height:26px;flex:none;background:linear-gradient(#c0c0c0,#999 50%,#aaa);border-right:4px solid #8fa3c0}
.tray{display:flex;gap:8px;margin:0 18px 0 5px}time{text-align:center;line-height:17px;width:60px;margin-right:11px}.desk{width:14px;height:38px;border:1px solid #6078a0;background:linear-gradient(#5b719a,#0d2a5c 40%)}`,
`<button class="orb" aria-label="Start"><svg width="38" height="38"><defs><radialGradient id="o" cy=".9"><stop stop-color="#4fd8f8"/><stop offset=".6" stop-color="#2b7ab8"/><stop offset="1" stop-color="#1c3f70"/></radialGradient></defs><circle cx="19" cy="19" r="18" fill="url(#o)" stroke="#8ab0d6"/><path d="M3 15C6-1 32-1 35 15c-8 4-24 4-32 0z" fill="#fff" opacity=".3"/><path d="M10 11q4-3 8 0l-1 8q-4-3-8 0z" fill="#e8562a"/><path d="M20 12q4 3 9 0l-2 8q-4 3-8 0z" fill="#8cc63e"/><path d="M8 21q4-3 8 0l-1 7q-4-2-8 0z" fill="#3fa4e8"/><path d="M18 22q4 3 8 0l-1 7q-4 3-8 0z" fill="#fbc52c"/></svg></button>
<button class="mid" aria-label="Spotify" style="margin-right:14px"><svg width="34" height="34"><circle cx="17" cy="17" r="16" fill="#84b81a"/><path d="M6 12q12-5 23 1M7 18q11-4 20 2M9 24q9-3 16 1" fill="none" stroke="#13280a" stroke-width="3" stroke-linecap="round"/><path d="M10 32q7-5 14 0" fill="#111"/></svg></button>
${app('explorer')}${app('people')}<button class="mid" aria-label="Media player" style="margin:0 15px 0 9px"><svg width="30" height="30"><path d="M10 3h18v24H10z" fill="#5ea6d8"/><path d="M3 3h22v24H3z" fill="#9fcbe8" stroke="#d8ecf8"/><circle cx="13" cy="15" r="9" fill="#ef7a1c" stroke="#fff"/><path d="M10 9v12l8-6z" fill="#fff"/></svg></button>
${app('chrome')}${app('board','act')}${app('monitor')}${app('paint')}
<div class="media"><svg width="154" height="26"><g fill="#eee" stroke="#666"><circle cx="11" cy="13" r="8"/><circle cx="30" cy="13" r="9"/><circle cx="49" cy="13" r="8"/></g><path d="M11 10v6l-5-3zM16 10v6l-5-3zM27 8v10l7-5zM45 10v6l5-3zM50 10v6l5-3zM62 11h3l4-3v10l-4-3h-3zM124 11h3l4-3v10l-4-3h-3z" fill="#333"/><path d="M74 13h42" stroke="#444" stroke-width="3"/><circle cx="117" cy="13" r="4" fill="#ddd" stroke="#444"/><path d="M133 10q2 3 0 6M135 8q3 5 0 10" stroke="#333" fill="none"/><path d="M142 3h9v9h-9zM142 15h9v8h-9z" fill="#ccc" stroke="#444"/><path d="M144 6h4v4h-4zM144 18h6l-3 3z" fill="#444"/></svg></div>
<div class="tray">${tray('Messenger','<path d="M2 8l4-5 6 5 3 7H9l-3-2-4 3z" fill="#ddd" stroke="#777"/><circle cx="10" cy="5" r="5" fill="#4bb04b"/><path d="M7 5l2 2 4-4" stroke="#fff" stroke-width="2" fill="none"/>')}${tray('Shield','<path d="M7 1h8v8q-2 5-8 6z" fill="#7d8cf0"/><path d="M0 2h6M1 5h5M1 8h5M3 11h3" stroke="#8d9cf0" stroke-width="2"/>')}${tray('Skype','<circle cx="6" cy="6" r="5" fill="#ccc"/><circle cx="10" cy="10" r="6" fill="#ccc"/><circle cx="8" cy="8" r="5" fill="#e2e2e2"/><path d="M5 5l6 6M11 5l-6 6" stroke="#aaa" stroke-width="2"/>')}${tray('Action centre','<path d="M2 1v14" stroke="#fff" stroke-width="2"/><path d="M3 2q3-1 5 1h5v6H8Q6 7 3 9z" fill="#fff"/><circle cx="11" cy="11" r="5" fill="#d22"/><path d="M9 9l4 4M13 9l-4 4" stroke="#fff"/>')}${tray('Mobile broadband','<path d="M1 1h14v14H1z" fill="#1e5488" stroke="#789"/><circle cx="7" cy="7" r="4" fill="none" stroke="#fff" stroke-width="2"/><path d="M12 11h2l-2 3h2" stroke="#fff" fill="none"/>')}${tray('Signal','<path d="M1 11h2v3H1zM4 10h2v4H4zM7 8h2v6H7zM10 6h2v8h-2zM13 3h2v11h-2z" fill="#fff"/>')}${tray('Power','<path d="M3 3h6v11H3z" fill="#223" stroke="#fff" stroke-width="2"/><path d="M8 5h6v4l-3 2-3-2zM9 2v3M13 2v3M11 10v4" stroke="#fff" fill="#fff"/>')}${tray('Volume','<path d="M1 6h3l4-4v12l-4-4H1z" fill="#fff"/><path d="M10 5q2 3 0 6M12 3q4 5 0 10" stroke="#fff" fill="none"/>')}</div>
<time>23:33<br>20/06/2010</time><button class="desk" aria-label="Show desktop"></button>`);

define('multisim-desktop',`:host{display:flex;flex-direction:column;height:100vh}main{display:flex;flex:1;min-height:0}`,
`<title-bar></title-bar><menu-bar></menu-bar><tool-rows></tool-rows><main><design-toolbox></design-toolbox><sheet-area></sheet-area><instrument-bar></instrument-bar></main><status-bar></status-bar><win-taskbar></win-taskbar>`);
</script>
</body>
</html>
